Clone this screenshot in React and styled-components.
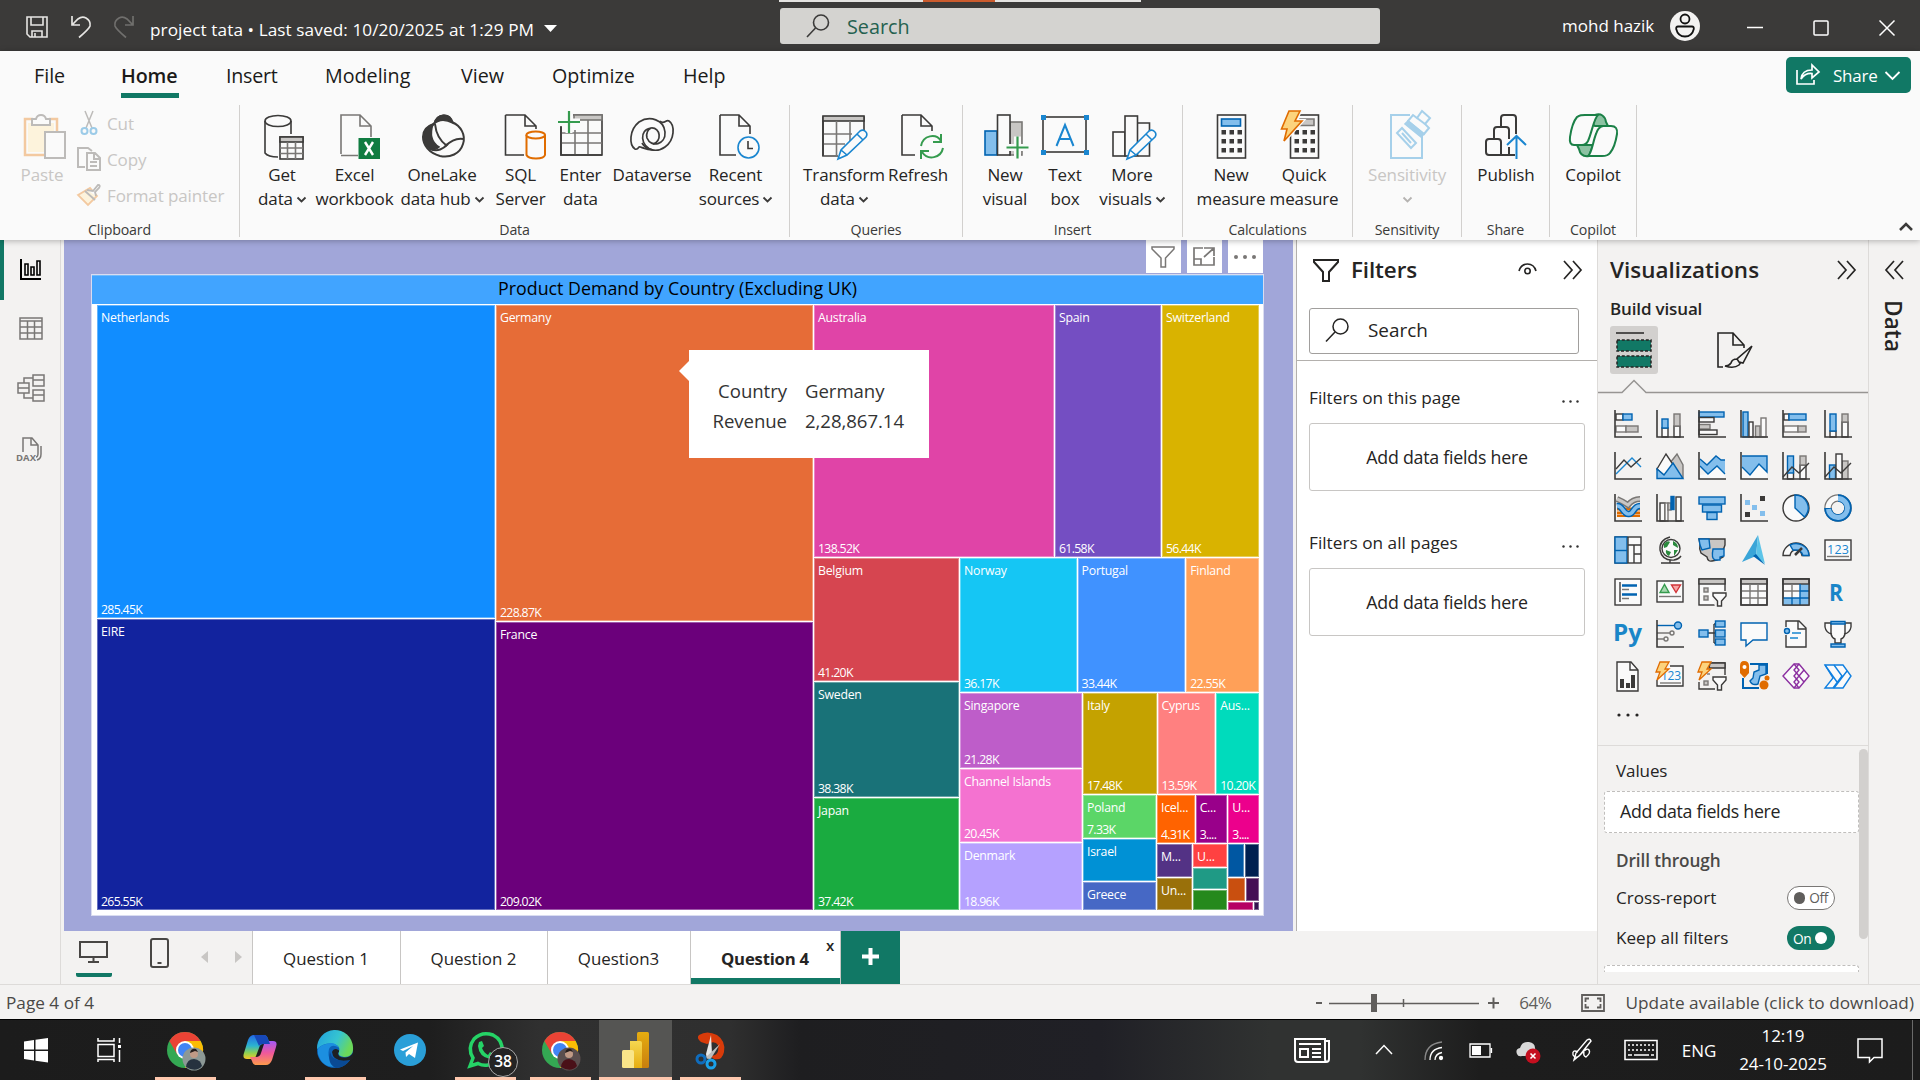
import React from "react";
import styled, { createGlobalStyle, css } from "styled-components";

const K = "#3b3a39", B = "#0063b1", BF = "#83beec", G = "#797775", GF = "#c8c6c4", W = "#fafafa";
const GREEN = "#117865";

const Global = createGlobalStyle`
  *{box-sizing:border-box}
  html,body{margin:0;padding:0;overflow:hidden}
  body{font-family:"Open Sans","Noto Sans",sans-serif;font-size:17px;color:#252423;white-space:nowrap}
  svg{display:block;flex:none;overflow:visible}
`;
const Screen = styled.div`width:1920px;height:1080px;display:flex;flex-direction:column;background:#f3f2f1;overflow:hidden;`;
const Txt = styled.span`
  font-size:${p => p.$s || 17}px;letter-spacing:${p => p.$ls || 0}px;font-weight:${p => p.$b || 400};
  color:${p => p.$c || "inherit"};line-height:${p => p.$lh || 24}px;
`;
const Spacer = styled.div`flex:1;`;
const Gap = styled.div`flex:none;width:${p => p.$w}px;`;

const Svg = ({ w, h, children, s = K, sw = 1.5, f = "none" }) => (
  <svg width={w} height={h} viewBox={`0 0 ${w} ${h}`} fill={f} stroke={s} strokeWidth={sw}>{children}</svg>
);
const R = ({ x, y, w, h, f = W, s = K }) => <rect x={x} y={y} width={w} height={h} fill={f} stroke={s} />;

/* ---------- Title bar ---------- */
const TitleBar = styled.header`height:51px;flex:none;background:${K};color:#fff;display:flex;align-items:flex-start;position:relative;`;
const TitleIcons = styled.div`display:flex;gap:23px;padding:16px 0 0 26px;width:150px;`;
const FileName = styled.div`display:flex;align-items:center;gap:10px;padding-top:18px;width:630px;`;
const TitleSearch = styled.div`
  width:600px;height:36px;margin-top:8px;background:#d4d3d0;border-radius:3px;display:flex;align-items:center;
  padding-left:26px;gap:17px;color:#25614f;padding-top:1px;
`;
const TopStrip = styled.div`position:absolute;left:779px;top:0;width:362px;height:2px;background:linear-gradient(90deg,#e4e3e1 144px,#cb5b2d 144px 216px,#e4e3e1 216px);`;
const UserArea = styled.div`flex:1;display:flex;align-items:center;padding-left:182px;height:52px;`;
const WinBtns = styled.div`display:flex;align-items:center;gap:50px;margin-left:47px;padding-top:4px;`;

const Title = () => (
  <TitleBar>
    <TopStrip />
    <TitleIcons>
      <Svg w={22} h={22} s="#e6e5e3" sw={1.6}><path d="M1 1H21V21H4L1 18ZM5 1V9H17V1M6 21V15H16V21M9 21V17" /></Svg>
      <Svg w={20} h={22} s="#e6e5e3" sw={1.7}><path d="M1 0V9H9M1 9L7 3Q11 0 15 2Q20 5 19 10Q18 13 8 21.500" /></Svg>
      <Svg w={20} h={22} s="#706f6d" sw={1.7}><path d="M19 0V9H11M19 9L13 3Q9 0 5 2Q0 5 1 10Q2 13 12 21.500" /></Svg>
    </TitleIcons>
    <FileName>
      <Txt $s={17.2} $ls={0.08}>project tata • Last saved: 10/20/2025 at 1:29 PM</Txt>
      <svg width="13" height="11"><path d="M0 0H13L6.500 7Z" fill="#fff" /></svg>
    </FileName>
    <TitleSearch>
      <Svg w={24} h={26} s="#3b3a39" sw={1.6}><circle cx="15" cy="8.500" r="7.500" /><path d="M9.500 14L1 23" /></Svg>
      <Txt $s={19.8}>Search</Txt>
    </TitleSearch>
    <UserArea>
      <Txt $s={17} $ls={0}>mohd hazik</Txt>
      <Gap $w={16} />
      <svg width="30" height="30"><circle cx="15" cy="15" r="15" fill="#f3f2f1" /><g fill="none" stroke="#111" strokeWidth="1.800"><circle cx="15" cy="8" r="4.500" /><path d="M8 15.500H22Q24 15.500 23.800 18Q22 25.500 15 25.500Q8 25.500 6.200 18Q6 15.500 8 15.500Z" /></g></svg>
      <WinBtns>
        <Svg w={16} h={16} s="#fff"><path d="M0 7.500H16" /></Svg>
        <Svg w={16} h={16} s="#fff"><rect x="1" y="1" width="14" height="14" rx="1" /></Svg>
        <Svg w={16} h={16} s="#fff"><path d="M0.500 0.500L15.500 15.500M15.500 0.500L0.500 15.500" /></Svg>
      </WinBtns>
    </UserArea>
  </TitleBar>
);

/* ---------- Ribbon ---------- */
const Ribbon = styled.section`height:189px;flex:none;background:#fafafa;display:flex;flex-direction:column;position:relative;z-index:2;box-shadow:0 1px 6px rgba(0,0,0,.28);`;
const MenuRow = styled.nav`height:54px;display:flex;padding-left:34px;`;
const MenuTab = styled.div`
  width:${p => p.$w}px;margin-right:${p => p.$g}px;height:47px;flex:none;padding-top:12px;white-space:nowrap;
  font-size:19.7px;line-height:26px;letter-spacing:${p => p.$ls || 0}px;color:#1b1a19;
  ${p => p.$on && css`font-weight:600;border-bottom:5px solid ${GREEN};`}
`;
const ShareBtn = styled.button`
  margin:6px 9px 0 auto;width:125px;height:36px;border:0;border-radius:5px;background:${GREEN};color:#fff;
  display:flex;align-items:center;padding:0 0 0 10px;font:17px "Open Sans",sans-serif;letter-spacing:-.2px;
`;
const Groups = styled.div`display:flex;height:132px;`;
const Group = styled.div`
  width:${p => p.$w}px;border-right:1px solid #d2d0ce;display:flex;flex-direction:column;justify-content:space-between;
`;
const GroupBody = styled.div`display:flex;padding:5px 0 0 ${p => p.$p}px;`;
const GroupLabel = styled.div`text-align:center;font-size:14.200px;line-height:20px;letter-spacing:-.15px;color:${K};margin-bottom:-3px;`;
const BigBtn = styled.div`
  width:${p => p.$w}px;flex:none;display:flex;flex-direction:column;align-items:center;
  color:${p => p.$off ? "#c8c6c4" : "#252423"};
  & > svg{margin-bottom:1px;}
`;
const BtnLine = styled.div`font-size:17px;line-height:24px;height:24px;letter-spacing:-.12px;display:flex;align-items:center;gap:4px;& > svg{margin-top:2px;}`;
const ClipList = styled.div`display:flex;flex-direction:column;padding-left:8px;`;
const ClipRow = styled.div`height:36px;display:flex;align-items:center;gap:6px;color:#c8c6c4;font-size:17px;letter-spacing:-.1px;margin-top:${p => p.$t || 0}px;`;
const Caret = ({ c = K }) => <Svg w={9} h={6} s={c} sw={1.8}><path d="M0.500 0.500L4.500 4.500L8.500 0.500" /></Svg>;

const Plus = ({ x, y, r = 12 }) => <g><path d={`M${x - r} ${y}H${x + r}M${x} ${y - r}V${y + r}`} stroke="#fafafa" strokeWidth="7" /><path d={`M${x - r} ${y}H${x + r}M${x} ${y - r}V${y + r}`} stroke="#359b4e" strokeWidth="2.200" /></g>;
const Pencil = () => <path d="M23 49L26 40L45 21Q48 19 50.500 21.500Q53 24 51 27L32 45ZM26 40L32 45M42 24L48 30" fill="#fafafa" stroke="#1a86d0" />;
const Calc = ({ x }) => (
  <g><rect x={x} y="5" width="28" height="43" fill="#fafafa" stroke={K} />
    {[0, 1, 2].map(r => [0, 1, 2].map(c => <rect key={r + "" + c} x={x + 4 + c * 8} y={20 + r * 9} width="4.500" height="4.500" fill={K} stroke="none" />))}</g>
);

const big = {
  get: <><path d="M9 11V43Q12 47 22 47M35 11V24" /><ellipse cx="22" cy="11" rx="13" ry="5.500" /><rect x="24" y="27" width="23" height="22" fill="#fafafa" /><rect x="24" y="27" width="23" height="5" fill={GF} /><path d="M24 38H47M24 43.500H47M31.500 32V49M39.500 32V49" stroke={G} /></>,
  excel: <><path d="M12 44V5H31L42 16V27M31 5V16H42M12 45.500H29" stroke={G} /><rect x="29.500" y="28" width="21.500" height="21" fill="#107c41" stroke="none" /><path d="M36 32L44 45M44 32L36 45" stroke="#fff" strokeWidth="2.400" /></>,
  lake: <g transform="translate(1 0)"><path d="M17 14C21 3 32 3 35 12C44 16 49 25 46 34C43 44 33 48 23 46C12 43 6 35 6 27C6 20 10 16 17 14Z" strokeWidth="2" /><path d="M17 14C20 3 33 2 36 13C28 9 21 10 17 14Z" fill={K} /><path d="M16 14C4 19 4 33 13 39C16 40 20 39 22 37C14 32 13 23 16 14Z" fill={K} /><path d="M18 14C19 24 23 31 30 36M28 36C33 32 38 28 46 29" strokeWidth="2" /><path d="M13 39C21 42 26 39 31 34" strokeWidth="2" /></g>,
  sql: <><path d="M10.500 5H30L41 16V19M30 5V16H41M10.500 5V45H29" /><path d="M31.500 25V45Q33 48.500 41 48.500Q49 48.500 50 45V25" stroke="#e06c00" fill="#fafafa" strokeWidth="2" /><ellipse cx="40.700" cy="25" rx="9.300" ry="3.500" stroke="#e06c00" fill="#fafafa" strokeWidth="2" /></>,
  enter: <><path d="M6 16V45H47V5H18" /><rect x="19" y="5" width="28" height="5" fill={GF} stroke={G} /><path d="M6 23H47M6 33H47M20 20V45M33 10V45" stroke={G} /><Plus x={14} y={12} r={11} /><path d="M6 17V45H47" /></>,
  verse: <><g strokeWidth="1.700"><path d="M9 39C3 35 3 20 13 12C24 5 38 10 39 22C40 35 25 38 21 28C20 23 21 20 25 18C13 19 14 37 27 40C19 40 14 36 13 37Q11 40 9 39Z" /><path d="M43 11C49 15 49 30 39 37C31 43 20 40 16 33M43 11C40 9 38 15 34 11M25 18C35 17 36 32 27 34" /></g></>,
  recent: <g transform="translate(2 0)"><path d="M8 5H27L38 16V24M27 5V16H38M8 5V45H24" /><circle cx="36.500" cy="37.500" r="10.500" fill="#fafafa" stroke="#1a86d0" /><path d="M36 31V38.500H41" /></g>,
  transform: <><path d="M46 22V7H5V46H20" /><rect x="5" y="6" width="41" height="5" fill={GF} /><path d="M5 24H34M5 34H27M18.500 11V46M32 11V32M5 46H20" stroke={G} /><path d="M5 11V46" /><g transform="translate(-3 0)"><Pencil /></g></>,
  refresh: <g transform="translate(2 0)"><path d="M8 5H27L38 16V21M27 5V16H38M8 5V45H21" /><g stroke="#359b4e" strokeWidth="2"><path d="M27 36C29 25 42 23 47 31M47 24V32H39M49 38C47 48 34 51 28 42M27 49V41H35" /></g></g>,
  newVisual: <><R x={6} y={21} w={12} h={24} f={BF} s={B} /><rect x="31" y="12" width="12" height="33" fill={GF} stroke={G} /><R x={18.5} y={5} w={12.500} h={40} /><Plus x={38.500} y={37.500} r={11} /></>,
  text: <><rect x="4" y="7" width="43" height="35" /><g fill="#1a86d0" stroke="none"><rect x="2" y="5" width="5" height="5" /><rect x="45" y="5" width="5" height="5" /><rect x="2" y="40" width="5" height="5" /><rect x="45" y="40" width="5" height="5" /></g><path d="M17.500 36L26 15L34.500 36M20.500 29H31.500" stroke="#1a86d0" strokeWidth="2" /></>,
  more: <><R x={7} y={22} w={12} h={24} /><path d="M32 13H43.500V46H32" /><R x={19} y={6} w={12.500} h={40} /><g transform="translate(-2 0)"><Pencil /></g></>,
  calc: <><Calc x={12.500} /><rect x="16.500" y="9" width="19" height="7" fill={BF} stroke={B} /></>,
  quick: <><Calc x={12.500} /><path d="M22 9H36V15.500H19Z" fill={GF} stroke={G} /><path d="M11 1H22L17 11H24L6 31L9 19H3.500Z" fill="#fcd37d" stroke="#fafafa" strokeWidth="4" /><path d="M11 1H22L17 11H24L6 31L9 19H3.500Z" fill="#fcd37d" stroke="#e06c00" /></>,
  sens: <g stroke="#a6d0ea" transform="translate(-1 0)"><path d="M30 5H11V48H42V26" strokeWidth="2" /><path d="M17 23L22 18L36 33L31 38ZM22 23L31 33" strokeWidth="2" /><path d="M28 11L33 5L37 8L42 1L50 8L45 14L49 18L44 24L28 11Z" fill="#fafafa" strokeWidth="2" /><path d="M37 8L45 14" strokeWidth="2" /><path d="M28 11L44 24L41 27L25 14Z" fill="#a6d0ea" /></g>,
  publish: <g strokeWidth="2"><path d="M18 45V44M9 29H18Q21 29 21 32V45H9Q6 45 6 42V32Q6 29 9 29ZM14 28V20Q14 17 17 17H26Q29 17 29 20V29M21 16V8Q21 5 24 5H33Q36 5 36 8V24M21 45H35M29 37V45" /><path d="M36.500 49V26M27 35L36.500 26L46 35" stroke="#1a86d0" /></g>,
  copilot: <g stroke="#1b8047" strokeWidth="2"><path d="M28 5C34 3 38 6 39 12L41 16H28L24 13Z" fill="#8cc2a2" /><path d="M10 35H26L22 46C16 47 13 44 12 39Z" fill="#8cc2a2" /><path d="M12 6Q13 5 18 5H31C27 8 25 22 21 31Q19 35 15 35H7Q2 35 3 27Q5 13 10 7Z" fill="#fafafa" /><path d="M29 16H44Q51 16 50 24Q48 37 43 43Q41 46 35 46H21C25 43 26 31 29 24Q31 17 36 16" fill="#fafafa" /></g>,
};
const Big = ({ w, icon, l1, l2, caret, off }) => (
  <BigBtn $w={w} $off={off}>
    <Svg w={52} h={52} sw={1.600}>{big[icon]}</Svg>
    <BtnLine>{l1}</BtnLine>
    {(l2 || caret) && <BtnLine>{l2}{caret && <Caret c={off ? "#b5b3b1" : K} />}</BtnLine>}
  </BigBtn>
);

const groups = [
  { n: "Data", w: 550, p: 12, b: [[60, "get", "Get", "data", 1], [85, "excel", "Excel", "workbook"], [90, "lake", "OneLake", "data hub", 1], [67, "sql", "SQL", "Server"], [53, "enter", "Enter", "data"], [90, "verse", "Dataverse"], [77, "recent", "Recent", "sources", 1]] },
  { n: "Queries", w: 173, p: 10, b: [[88, "transform", "Transform", "data", 1], [60, "refresh", "Refresh"]] },
  { n: "Insert", w: 220, p: 12, b: [[60, "newVisual", "New", "visual"], [60, "text", "Text", "box"], [74, "more", "More", "visuals", 1]] },
  { n: "Calculations", w: 170, p: 12, b: [[72, "calc", "New", "measure"], [74, "quick", "Quick", "measure"]] },
  { n: "Sensitivity", w: 109, p: 14, b: [[80, "sens", "Sensitivity", "", 1, 1]] },
  { n: "Share", w: 88, p: 4, b: [[80, "publish", "Publish"]] },
  { n: "Copilot", w: 87, p: 4, b: [[78, "copilot", "Copilot"]] },
];
const CollapseBtn = styled.div`flex:1;display:flex;align-items:flex-end;justify-content:flex-end;padding:0 7px 6px 0;`;

const RibbonBar = () => (
  <Ribbon>
    <MenuRow>
      <MenuTab $w={31} $g={56}>File</MenuTab>
      <MenuTab $w={58} $g={47} $on $ls={-0.15}>Home</MenuTab>
      <MenuTab $w={52} $g={47} $ls={-0.25}>Insert</MenuTab>
      <MenuTab $w={88} $g={48}>Modeling</MenuTab>
      <MenuTab $w={44} $g={47}>View</MenuTab>
      <MenuTab $w={84} $g={47}>Optimize</MenuTab>
      <MenuTab $w={44} $g={0}>Help</MenuTab>
      <ShareBtn>
        <Svg w={24} h={22} s="#fff" sw={1.700}><path d="M1 6V20H18V16M5 15Q6 6 16 6V1L23 8L16 14V9.500Q9 9 5 15Z" /></Svg>
        <Gap $w={13} />Share<Gap $w={7} />
        <Svg w={15} h={9} s="#fff" sw={1.800}><path d="M0.500 1L7.500 8L14.500 1" /></Svg>
      </ShareBtn>
    </MenuRow>
    <Groups>
      <Group $w={240}>
        <GroupBody $p={15}>
          <BigBtn $w={54} $off>
            <Svg w={52} h={52} sw={2}>
              <path d="M17 9H9V45H31M33 9H41V22" stroke="#f3c9a0" strokeWidth="2.500" /><path d="M12 13H38V42H12Z" fill="#fdf3dc" stroke="none" />
              <path d="M16 15V9H20Q21 5 25 5Q29 5 30 9H34V15Z" stroke="#bdbbb9" fill="#fafafa" /><rect x="29" y="22" width="20" height="26" stroke="#bdbbb9" fill="#fafafa" />
            </Svg>
            <BtnLine>Paste</BtnLine>
          </BigBtn>
          <ClipList>
            <ClipRow $t={-5}><Svg w={24} h={24} s="#bdbbb9"><path d="M8 0L15 17M16 0L9 17" /><circle cx="7.500" cy="20" r="3" stroke="#9ccbe8" strokeWidth="2" /><circle cx="16.500" cy="20" r="3" stroke="#9ccbe8" strokeWidth="2" /></Svg>Cut</ClipRow>
            <ClipRow><Svg w={24} h={24} s="#bdbbb9" sw={2}><path d="M8 20H1V1H11L15 4" /><path d="M10 6H18L23 11V23H10ZM17 6V12H23M13 15H20M13 19H20" fill="#fafafa" /></Svg>Copy</ClipRow>
            <ClipRow><Svg w={24} h={24} s="#bdbbb9" sw={1.800}><path d="M1 12L13 5L20 13L11 22Z" stroke="#f3c9a0" fill="#fdf3dc" /><path d="M8 8L18 17M10 7L16 8L21 2Q24 2 22 5L18 9L19 13" fill="#fafafa" /></Svg>Format painter</ClipRow>
          </ClipList>
        </GroupBody>
        <GroupLabel>Clipboard</GroupLabel>
      </Group>
      {groups.map(g => (
        <Group key={g.n} $w={g.w}>
          <GroupBody $p={g.p}>{g.b.map((b, i) => <Big key={i} w={b[0]} icon={b[1]} l1={b[2]} l2={b[3]} caret={b[4]} off={b[5]} />)}</GroupBody>
          <GroupLabel>{g.n}</GroupLabel>
        </Group>
      ))}
      <CollapseBtn><Svg w={14} h={9} sw={2.500}><path d="M1 8L7 2L13 8" /></Svg></CollapseBtn>
    </Groups>
  </Ribbon>
);

/* ---------- Left rail ---------- */
const Main = styled.div`height:744px;flex:none;display:flex;`;
const Rail = styled.nav`width:61px;border-right:1px solid #dddbd9;display:flex;flex-direction:column;`;
const RailItem = styled.div`
  height:${p => p.$h || 60}px;display:flex;align-items:center;justify-content:center;
  border-left:4px solid ${p => p.$on ? GREEN : "transparent"};padding:0 3px 2px 0;
`;
const SideRail = () => (
  <Rail>
    <RailItem $on><Svg w={21} h={21} s="#000" sw={2}><path d="M1 0V20H21" /><path d="M5 5H8V16H5ZM11 8H14V16H11ZM17 2H20V16H17Z" strokeWidth="1.600" /></Svg></RailItem>
    <RailItem $h={58}><Svg w={24} h={23} s={G}><path d="M1 1H23V22H1ZM1 4H23M1 10H23M1 16H23M8.500 4V22M15.500 4V22" /></Svg></RailItem>
    <RailItem $h={62}><Svg w={28} h={28} s={G}><path d="M16 1H27V12H16ZM16 6H27M1 9H12V19H1ZM1 14H12M16 16H27V27H16ZM16 21H27M7 9V4H16M7 19V24H16" /></Svg></RailItem>
    <RailItem $h={60}><Svg w={30} h={24} s={G}><path d="M7 15V1H16L22 8V16Q22 20 20 20M15 1V8H22M25 9V17Q25 22 21 23" /><text x="0" y="23.500" fontSize="9.500" fontWeight="700" fill={G} stroke="none" textLength="20">DAX</text></Svg></RailItem>
  </Rail>
);

/* ---------- Canvas and treemap ---------- */
const Work = styled.div`width:1235px;display:flex;flex-direction:column;`;
const Canvas = styled.div`height:691px;flex:none;margin:0 3px 0 3px;background:#a1a6d9;padding-left:27px;display:flex;flex-direction:column;`;
const HeaderIcons = styled.div`height:34px;width:1172px;display:flex;justify-content:flex-end;gap:6px;`;
const HeaderBtn = styled.div`width:35px;height:33px;background:#fff;display:flex;align-items:center;justify-content:center;padding-right:1px;`;
const Visual = styled.div`width:1173px;height:642px;background:#fff;border:1px solid #d9dcf0;position:relative;`;
const VisualTitle = styled.div`height:29px;background:#41a4ff;text-align:center;font-size:17.800px;line-height:24px;color:#000;border-top:1px solid #72bbfb;`;
const TreeMap = styled.div`margin:1px 0 0 5px;width:1162px;height:605px;display:flex;gap:1px;`;
const Split = styled.div`display:flex;flex-direction:${p => p.$d};gap:1px;flex:${p => p.$n} 1 0;min-width:0;min-height:0;`;
const Tile = styled.div`
  flex:${p => p.$n} 1 0;min-width:0;min-height:0;background:${p => p.$c};color:#fff;box-shadow:inset 0 0 0 1px rgba(255,255,255,.35);
  display:flex;flex-direction:column;justify-content:space-between;overflow:hidden;
  font-size:12.300px;line-height:20px;letter-spacing:-.25px;
`;
const Name = styled.span`margin:3px 0 0 4px;`;
const Val = styled.span`line-height:14px;letter-spacing:-.68px;margin:0 0 1px 4px;`;
const t = (n, c, name, v) => ({ n, c, name, v });
const sp = (n, d, k) => ({ n, d, k });
const tree = [
  sp(398, "column", [t(313, "#118dff", "Netherlands", "285.45K"), t(291, "#12239e", "EIRE", "265.55K")]),
  sp(317, "column", [t(316, "#e66c37", "Germany", "228.87K"), t(288, "#6b007b", "France", "209.02K")]),
  sp(445, "column", [
    sp(252, "row", [t(240, "#e044a7", "Australia", "138.52K"), t(106, "#744ec2", "Spain", "61.58K"), t(97, "#d9b300", "Switzerland", "56.44K")]),
    sp(352, "row", [
      sp(145, "column", [t(123, "#d64550", "Belgium", "41.20K"), t(115, "#197278", "Sweden", "38.38K"), t(112, "#1aab40", "Japan", "37.42K")]),
      sp(299, "column", [
        sp(134, "row", [t(117, "#15c6f4", "Norway", "36.17K"), t(108, "#4092ff", "Portugal", "33.44K"), t(73, "#ffa058", "Finland", "22.55K")]),
        sp(217, "row", [
          sp(122, "column", [t(75, "#be5dc9", "Singapore", "21.28K"), t(73, "#f472d0", "Channel Islands", "20.45K"), t(67, "#b5a1ff", "Denmark", "18.96K")]),
          sp(176, "column", [
            sp(101, "row", [t(74, "#c4a200", "Italy", "17.48K"), t(58, "#ff8080", "Cyprus", "13.59K"), t(43, "#00dbbc", "Aus...", "10.20K")]),
            sp(115, "row", [
              sp(73, "column", [t(43, "#5bd667", "Poland", "7.33K"), t(42, "#0091d5", "Israel"), t(28, "#4668c5", "Greece")]),
              sp(102, "column", [
                sp(48, "row", [t(38, "#ff6300", "Icel...", "4.31K"), t(32, "#99008a", "C...", "3...."), t(31, "#ec008c", "U...", "3....")]),
                sp(66, "row", [
                  sp(35, "column", [t(33, "#533285", "M..."), t(32, "#99700a", "Un...")]),
                  sp(34, "column", [t(23, "#ff4141", "U..."), t(21, "#1f9a85"), t(20, "#25891c")]),
                  sp(31, "column", [
                    sp(32, "row", [t(16, "#0057a2"), t(14, "#002050")]),
                    sp(23, "row", [t(17, "#c94f0f"), t(13, "#450f54")]),
                    sp(8, "row", [t(25, "#b60064"), t(5, "#34124f")]),
                  ]),
                ]),
              ]),
            ]),
          ]),
        ]),
      ]),
    ]),
  ]),
];
const Node = ({ x }) => x.k
  ? <Split $d={x.d} $n={x.n}>{x.k.map((c, i) => <Node key={i} x={c} />)}</Split>
  : <Tile $n={x.n} $c={x.c}>{x.name && <Name>{x.name}</Name>}{x.v && <Val>{x.v}</Val>}</Tile>;

const Tooltip = styled.div`
  position:absolute;left:597px;top:75px;width:240px;height:108px;background:#fff;padding:26px 23px;
  display:grid;grid-template-columns:75px auto;column-gap:18px;grid-auto-rows:30px;font-size:18.600px;line-height:30px;color:#333;letter-spacing:-.05px;
  &::before{content:"";position:absolute;left:-10px;top:11px;border:10px solid transparent;border-left:0;border-right-color:#fff;}
`;
const TipLabel = styled.div`text-align:right;`;

/* ---------- Page tabs ---------- */
const Pages = styled.div`height:53px;flex:none;display:flex;`;
const ViewBtns = styled.div`width:192px;display:flex;border-right:1px solid #c8c6c4;`;
const DeskBtn = styled.div`width:36px;height:46px;margin-left:15px;border-bottom:4px solid ${GREEN};border-radius:0 0 2px 2px;display:flex;justify-content:center;padding:10px 2px 0 0;`;
const PhoneBtn = styled.div`margin:7px 32px 0 38px;`;
const Arrows = styled.div`display:flex;gap:27px;padding-top:20px;`;
const Page = styled.div`
  width:${p => p.$w}px;background:#fff;border-right:1px solid #c8c6c4;display:flex;align-items:center;justify-content:center;
  font-size:${p => p.$on ? 16.7 : 16.9}px;letter-spacing:${p => p.$on ? -.2 : 0}px;padding:1px 1px 0 0;position:relative;
  ${p => p.$on && css`font-weight:700;box-shadow:inset 0 -6px ${GREEN};`}
`;
const CloseX = styled.span`position:absolute;right:6px;top:4px;font-size:15px;line-height:20px;font-weight:600;`;
const AddPage = styled.div`width:59px;background:${GREEN};display:flex;align-items:center;justify-content:center;padding-bottom:2px;`;

const WorkArea = () => (
  <Work>
    <Canvas>
      <HeaderIcons>
        <HeaderBtn><Svg w={24} h={22} s={G}><path d="M1 1H23V3L14.500 12V21H10V12L1 3Z" /></Svg></HeaderBtn>
        <HeaderBtn><Svg w={22} h={19} s={G} sw={1.700}><path d="M10 1H1V18H21V10M1 12H8V18M11 1H21V9M21 1L11 10" /></Svg></HeaderBtn>
        <HeaderBtn><Svg w={22} h={4} s="none" f={G}><circle cx="2" cy="2" r="2" /><circle cx="11" cy="2" r="2" /><circle cx="20" cy="2" r="2" /></Svg></HeaderBtn>
      </HeaderIcons>
      <Visual>
        <VisualTitle>Product Demand by Country (Excluding UK)</VisualTitle>
        <TreeMap>{tree.map((x, i) => <Node key={i} x={x} />)}</TreeMap>
        <Tooltip><TipLabel>Country</TipLabel><div>Germany</div><TipLabel>Revenue</TipLabel><div>2,28,867.14</div></Tooltip>
      </Visual>
    </Canvas>
    <Pages>
      <ViewBtns>
        <DeskBtn><Svg w={29} h={22} s="#484644" sw={2}><path d="M1 1H28V16H1ZM14.500 16V21M9 21H20" /></Svg></DeskBtn>
        <PhoneBtn><Svg w={19} h={30} s="#484644" sw={2}><rect x="1" y="1" width="17" height="28" rx="2" /><path d="M7.500 25H11.500" /></Svg></PhoneBtn>
        <Arrows><svg width="7" height="12"><path d="M7 0V12L0 6Z" fill="#c8c6c4" /></svg><svg width="7" height="12"><path d="M0 0V12L7 6Z" fill="#c8c6c4" /></svg></Arrows>
      </ViewBtns>
      <Page $w={148}>Question 1</Page>
      <Page $w={147}>Question 2</Page>
      <Page $w={143}>Question3</Page>
      <Page $w={150} $on>Question 4<CloseX>x</CloseX></Page>
      <AddPage><Svg w={17} h={17} s="#fff" sw={4}><path d="M0 8.500H17M8.500 0V17" /></Svg></AddPage>
    </Pages>
  </Work>
);

/* ---------- Filters ---------- */
const FilterCol = styled.aside`width:301px;height:691px;background:#fff;border-left:1px solid #b3b0ad;`;
const PaneHead = styled.div`display:flex;align-items:center;height:60px;padding:0 ${p => p.$r || 15}px 0 ${p => p.$p}px;color:#252423;`;
const FilterTop = styled.div`height:121px;border-bottom:1px solid #b3b0ad;`;
const SearchBox = styled.div`margin:8px 0 0 12px;width:270px;height:46px;border:1px solid #a19f9d;border-radius:3px;display:flex;align-items:center;gap:19px;padding:0 0 2px 15px;font-size:18.900px;`;
const FSection = styled.div`height:145px;padding:25px 12px 0 12px;`;
const FHead = styled.div`display:flex;justify-content:space-between;height:24px;line-height:24px;font-size:17.200px;letter-spacing:.02px;padding-right:6px;margin-bottom:13px;`;
const DropBox = styled.div`height:68px;border:1px solid #c8c6c4;border-radius:3px;display:flex;align-items:center;justify-content:center;font-size:17.800px;letter-spacing:-.25px;`;
const Chev = ({ flip }) => <Svg w={19} h={20} s="#252423" sw={1.700}><path d={flip ? "M9 1L1 10L9 19M18 1L10 10L18 19" : "M1 1L9 10L1 19M10 1L18 10L10 19"} /></Svg>;
const Dots = () => <Svg w={17} h={22} s="none" f="#333"><circle cx="1.500" cy="15.500" r="1.200" /><circle cx="8.500" cy="15.500" r="1.200" /><circle cx="15.500" cy="15.500" r="1.200" /></Svg>;

const Filters = () => (
  <FilterCol>
    <FilterTop>
      <PaneHead $p={16}>
        <Svg w={26} h={23} s="#252423" sw={2}><path d="M1 1H25V3L16 13V22H10V13L1 3Z" /></Svg>
        <Gap $w={12} /><Txt $s={22.4} $b={600} $ls={-0.1} $lh={30}>Filters</Txt><Spacer />
        <Svg w={19} h={14} s="#252423" sw={1.600}><path d="M1 8Q3 1 9.500 1Q16 1 18 8" /><circle cx="9.500" cy="8" r="2.700" /></Svg>
        <Gap $w={26} /><Chev />
      </PaneHead>
      <SearchBox><Svg w={24} h={24} s="#252423"><circle cx="15.500" cy="8.500" r="7.500" /><path d="M10 14L1 23.500" /></Svg>Search</SearchBox>
    </FilterTop>
    <FSection><FHead>Filters on this page<Dots /></FHead><DropBox>Add data fields here</DropBox></FSection>
    <FSection><FHead>Filters on all pages<Dots /></FHead><DropBox>Add data fields here</DropBox></FSection>
  </FilterCol>
);

/* ---------- Visualizations ---------- */
const VizCol = styled.aside`width:272px;border-left:1px solid #dddbd9;border-right:1px solid #dddbd9;display:flex;flex-direction:column;`;
const BuildLabel = styled.div`height:26px;padding:0 0 0 12px;margin-top:-5px;font-weight:600;font-size:17px;line-height:28px;letter-spacing:-.15px;`;
const ModeRow = styled.div`display:flex;padding:5px 0 0 12px;gap:53px;`;
const ModeBtn = styled.div`width:48px;height:48px;border-radius:3px;background:${p => p.$on ? "#d2d0ce" : "none"};display:flex;align-items:center;justify-content:center;`;
const Grid = styled.div`display:grid;grid-template-columns:repeat(6,28px);gap:14px;padding:16px 0 0 16px;`;
const More = styled.div`padding:22px 0 0 19px;height:55px;`;
const Wells = styled.div`height:239px;border-top:1px solid #dddbd9;display:flex;`;
const WellBody = styled.div`width:261px;padding-left:6px;display:flex;flex-direction:column;`;
const WellRow = styled.div`display:flex;align-items:center;flex:none;height:${p => p.$h}px;padding:${p => p.$t || 0}px 24px 0 12px;justify-content:space-between;`;
const Well = styled.div`height:${p => p.$h}px;flex:none;background:#fff;border:1px dashed #c0bebc;border-radius:3px 3px ${p => p.$cut ? "0 0" : "3px 3px"};${p => p.$cut && "border-bottom:0;margin-top:4px;"}padding:0 15px;font-size:17.800px;line-height:38px;letter-spacing:-.3px;`;
const Thumb = styled.div`width:9px;height:190px;border-radius:5px;background:#d2d0ce;margin-top:3px;`;
const Toggle = styled.div`
  width:48px;height:24px;border-radius:12px;display:flex;align-items:center;gap:4px;padding:0 6px;font-size:13.700px;letter-spacing:-.4px;
  ${p => p.$on ? css`background:${GREEN};color:#fff;` : css`background:#fff;border:1px solid #797775;color:#605e5c;`}
  &::${p => p.$on ? "after" : "before"}{content:"";width:12px;height:12px;border-radius:6px;background:${p => p.$on ? "#fff" : "#605e5c"};}
`;
const Ax = () => <path d="M1 0V27H28" strokeWidth="1.600" />;
const ln = "M1 25L10 15L17 21L27 11";
const Bolt = () => <path d="M4 0H13L9 7H13L1 18L4 10H0Z" fill="#fcd37d" stroke="#e06c00" strokeWidth="1.300" />;
const Fun = () => <path d="M15 15H28V18L23.500 23V28H19.500V23L15 18Z" fill={W} />;
const viz = [
  <><R x={2} y={4} w={7} h={6} /><R x={9} y={4} w={9} h={6} f={BF} s={B} /><R x={2} y={16} w={10} h={6} s={G} /><R x={12} y={16} w={12} h={6} f={GF} s={G} /><Ax /></>,
  <><R x={6} y={18} w={6} h={9} /><R x={6} y={9} w={6} h={9} f={BF} s={B} /><R x={18} y={16} w={6} h={11} /><R x={18} y={4} w={6} h={12} f={GF} s={G} /><Ax /></>,
  <><R x={1} y={2} w={25} h={5} f={BF} s={B} /><R x={1} y={7.500} w={15} h={4.500} /><R x={1} y={14.500} w={11} h={4.500} f={GF} s={G} /><R x={1} y={20} w={18} h={4.500} /><Ax /></>,
  <><R x={3} y={2} w={5} h={25} f={BF} s={B} /><R x={9} y={12} w={4} h={15} /><R x={15.500} y={16} w={4.500} h={11} f={GF} s={G} /><R x={21} y={8} w={5} h={19} s={G} /><Ax /></>,
  <><R x={2} y={4} w={5} h={6} /><R x={7} y={4} w={17} h={6} f={BF} s={B} /><R x={2} y={16} w={14} h={6} s={G} /><R x={16} y={16} w={8} h={6} f={GF} s={G} /><Ax /></>,
  <><R x={6} y={21} w={6} h={6} /><R x={6} y={4} w={6} h={17} f={BF} s={B} /><R x={18} y={12} w={6} h={15} /><R x={18} y={4} w={6} h={8} f={GF} s={G} /><Ax /></>,
  <><path d="M2 22L18 6L27 15" stroke="#1a86d0" /><path d="M2 17L10 8L17 15L27 6" /><Ax /></>,
  <><path d="M14 11L21 2L27 13V26" fill={GF} stroke={G} /><path d="M1 17L10 2L18 14L9 24Z" fill={W} /><path d="M1 17L8 23L17 11L27 26.500H1Z" fill={BF} stroke={B} /></>,
  <><path d="M2 23L9 22L18 14L27 22V26H2Z" fill={W} stroke="none" /><path d="M2 7L9 13L18 4L23 8H27V22L19 14L10 22L2 14Z" fill={BF} stroke="none" /><path d="M2 7L9 13L18 4L23 8H27M27 22L19 14L10 22L2 14" stroke={B} /><Ax /></>,
  <><path d="M2 15L10 23L19 12L27 20V26H2Z" fill={W} stroke="none" /><path d="M2 4H27V20L19 12L10 23L2 15Z" fill={BF} stroke="none" /><path d="M2 4H27V20L19 12L10 23L2 15" stroke={B} /><Ax /></>,
  <><R x={5.500} y={20} w={6} h={7} /><R x={5.500} y={4} w={6} h={17} f={BF} s={B} /><R x={18} y={13} w={6} h={14} /><R x={18} y={4} w={6} h={9} f={GF} s={G} /><path d={ln} /><Ax /></>,
  <><R x={5.500} y={13} w={6} h={14} f={BF} s={B} /><R x={18} y={9} w={6} h={18} f={GF} s={G} /><R x={12} y={2} w={6} h={25} /><path d={ln} /><Ax /></>,
  <><path d="M3 19H8M20 19H26M3 15H26" stroke="#e06c00" strokeWidth="3" /><path d="M3 22H26" stroke="#e06c00" strokeWidth="2" /><path d="M3 5Q8 7 14 11Q19 5 26 5" stroke={G} strokeWidth="6" /><path d="M3 5Q8 7 14 11Q19 5 26 5" stroke={GF} strokeWidth="3" /><path d="M3 12C9 11 9 21 15 20C20 20 19 12 26 12" stroke={B} strokeWidth="6.500" /><path d="M3 12C9 11 9 21 15 20C20 20 19 12 26 12" stroke={BF} strokeWidth="3.500" /><Ax /></>,
  <><R x={4} y={9} w={5} h={18} /><R x={9} y={9} w={3} h={18} f={W} s={G} /><R x={12} y={9} w={3} h={7} f={GF} s={G} /><R x={15} y={2.500} w={3} h={13} f={B} s={B} /><R x={20} y={3} w={5} h={24} /><Ax /></>,
  <><R x={1} y={3} w={26} h={7} f={BF} s={B} /><R x={4.500} y={11} w={19} h={7} f={BF} s={B} /><R x={9} y={18.500} w={10} h={7} f={BF} s={B} /></>,
  <><g stroke="none"><rect x="5" y="6" width="5" height="5" fill={BF} /><rect x="20" y="2" width="5" height="5" fill={K} /><rect x="12" y="11" width="5" height="5" fill={BF} /><rect x="5" y="18" width="5" height="5" fill={K} /><rect x="20" y="17" width="5" height="5" fill={BF} /></g><Ax /></>,
  <><circle cx="14" cy="14" r="13" fill={W} /><path d="M13 1A13 13 0 0 1 22.500 23L13 14Z" fill={BF} stroke={B} /></>,
  <><circle cx="14" cy="14" r="10" stroke={G} strokeWidth="7.500" /><circle cx="14" cy="14" r="10" stroke={W} strokeWidth="5" /><path d="M14 4A10 10 0 1 1 4 14" stroke={B} strokeWidth="7.500" /><path d="M14 4.500A9.500 9.500 0 1 1 4.500 15" stroke={BF} strokeWidth="5" /></>,
  <><R x={1} y={1} w={26} h={26} /><R x={1} y={1} w={12} h={26} f={BF} s={B} /><path d="M1 14.500H13" stroke={B} /><path d="M14 9H27M20 9V27M20 18H27M14 1V27" /></>,
  <><circle cx="15" cy="12.500" r="9" fill={W} /><path d="M8 8Q11 4 14 6L11 11L8 12ZM17 5Q22 7 22 12L17 9ZM10 14L15 16L13 20Q9 18 10 14ZM18 14H22L18 20Z" fill="#2b8a3e" stroke="none" /><path d="M14 1Q3 4 4 14Q6 25 18 24Q23 23 25 20M14 24V27M5 27H24" /></>,
  <><path d="M1 3H27V9Q26 12 25 14V21L19 24L14 25Q10 26 9 21L3 17Q1 13 2 8Z" fill={GF} stroke={K} /><path d="M1 3L11 3L12 12L4 14L2 9Z" fill={BF} stroke={B} /><path d="M15 13H26V20L22 21V24H17Q13 23 15 13Z" fill={BF} stroke={B} /></>,
  <g stroke="none"><path d="M18 -1L2 26L16 20Z" fill="#3aa5d8" /><path d="M18 -1L16 20L25 28Z" fill="#5cc4e8" /><path d="M13 20L16 18L25 29Z" fill="#0063b1" /></g>,
  <><path d="M1 19.500A13 12.500 0 0 1 27 19.500H20Q19 14 14 14Q9 14 8 19.500Z" fill={W} /><path d="M8 9A13 12.500 0 0 1 27 19.500H21Q19 14 14 14L11 14Z" fill={BF} stroke={B} /><path d="M13 19L20 12" strokeWidth="2.500" /></>,
  <><R x={1} y={4} w={26} h={20} /><text x="3" y="17.500" fontSize="12.500" textLength="22" fill="#1a86d0" stroke="none">123</text><path d="M3 20.500H25" stroke={G} /></>,
  <><R x={1} y={1} w={26} h={26} /><path d="M6 4V24" /><path d="M8 7.500H23M8 16.500H23" stroke={B} strokeWidth="2.300" /><path d="M8 11.500H15M8 20.500H15" stroke={G} /></>,
  <><R x={1} y={3} w={26} h={21} /><path d="M4 14.500L8.500 6.500L13 14.500Z" stroke="#359b4e" fill="#a7d8b0" /><path d="M15.500 7H24.500L20 14.500Z" stroke="#d13438" fill="#f6a5a5" /><path d="M3 18.500H25" stroke={G} /></>,
  <><R x={1} y={1} w={26} h={26} /><R x={1} y={1} w={26} h={5} f={GF} /><R x={6} y={10} w={4} h={4} f={GF} s={G} /><R x={6} y={18} w={4} h={4} f={GF} s={G} /><path d="M13 13H29V29H17Z" fill="#f3f2f1" stroke="none" /><Fun /></>,
  <><R x={1} y={1} w={26} h={26} /><R x={1} y={1} w={26} h={5} f={GF} /><path d="M1 13H27M1 20H27M10 6V27M18 6V27" stroke={G} /><rect x="1" y="1" width="26" height="26" /></>,
  <><R x={1} y={1} w={26} h={26} /><rect x="18" y="6" width="9" height="21" fill={BF} stroke="none" /><rect x="1" y="20" width="26" height="7" fill={BF} stroke="none" /><R x={1} y={1} w={26} h={5} f={GF} /><path d="M1 13H18M10 6V20" stroke={G} /><path d="M18 6V27M1 20H27M10 20V27M18 13H27" stroke={B} /><rect x="1" y="1" width="26" height="26" /></>,
  <text x="5" y="22.500" fontSize="24" fontWeight="700" textLength="14" lengthAdjust="spacingAndGlyphs" fill="#1a86c8" stroke="none">R</text>,
  <text x="-1" y="20.500" fontSize="24" fontWeight="700" textLength="29" lengthAdjust="spacingAndGlyphs" fill="#1a86c8" stroke="none">Py</text>,
  <><path d="M1 5.500H19" stroke={B} /><circle cx="22" cy="5.500" r="3.500" fill={BF} stroke={B} /><path d="M1 13H14M1 19H8" stroke={G} /><circle cx="16" cy="13" r="2" stroke={G} /><circle cx="10" cy="19" r="2" stroke={G} /><Ax /></>,
  <><path d="M10 13H16M16 4V23M16 4H18M16 23H18M16 13H18" /><R x={1} y={10} w={9} h={7} f={BF} s={B} /><R x={17.500} y={1} w={9.500} h={6} f={BF} s={B} /><R x={17.500} y={10} w={9.500} h={7} f={BF} s={B} /><R x={17.500} y={19} w={9.500} h={6} f={BF} s={B} /></>,
  <path d="M1 3H27V20H13L6 26V20H1Z" fill={W} stroke={B} />,
  <><path d="M4 7V1H17L24 8V27H4V15" fill={W} /><path d="M16 1V9H24" /><circle cx="5" cy="11" r="2.500" fill={BF} stroke={B} /><path d="M10 13H19M8 18H16" stroke="#1a86d0" /></>,
  <><path d="M7 3H21V14Q20 18 17 19V23H11V19Q8 18 7 14ZM7 3H1V7Q2 13 8 14M21 3H27V7Q26 13 20 14" fill={W} /><path d="M7 1.500H21V4H7ZM7 24H21V27H7Z" fill={BF} stroke={B} /></>,
  <><path d="M3 0H17L24 8V29H3Z" fill={W} /><path d="M16 0V8H24" /><g fill={K} stroke="none"><rect x="6" y="17" width="4" height="9" /><rect x="12" y="21" width="4" height="5" /><rect x="17" y="13" width="4" height="13" /></g></>,
  <><path d="M14 4H27V24H1V18" fill={W} /><text x="5" y="18" fontSize="12" fill="#1a86d0" stroke="none" textLength="20">123</text><path d="M4 21H25" stroke={G} /><Bolt /></>,
  <><path d="M14 1H27V13M1 20V27H17" /><path d="M12 1H27V6H11Z" fill={GF} /><R x={6} y={19} w={4} h={4} f={GF} s={G} /><path d="M9 12H12" stroke={G} /><Bolt /><Fun /></>,
  <><path d="M10 2H27V12M3 16V26H19" stroke={B} strokeWidth="2" /><path d="M19 3V8L14 10L13 16L10 19Q12 24 18 22L20 14L26 12V3Z" fill={BF} stroke={B} /><path d="M4 -1Q9 -1 9 4V11L4.500 16L0 11V4Q0 -1 4 -1Z" fill="#e06c00" stroke="none" /><circle cx="4.500" cy="5" r="2" fill="#fff" stroke="none" /><circle cx="24" cy="23" r="4.500" fill="#e06c00" stroke="none" /><circle cx="27" cy="16" r="2.500" fill="#e06c00" stroke="none" /></>,
  <g stroke="#8b2fa0"><path d="M12 2H17L27 14L17 26H12L1 14Z" fill={W} /><path d="M12 2L17 8L12 14L17 20L12 26M17 2L12 8L22 20M22 8L12 20L17 26" /></g>,
  <g stroke="#0f7fe0"><path d="M1 3H19L27 14L19 26H1L9 16Z" fill={W} /><path d="M10 3L18 14L9 26M1 3L13 20M23 9L10 26" /></g>,
];

const Visualizations = () => (
  <VizCol>
    <PaneHead $p={12} $r={12}><Txt $s={22.4} $b={600} $ls={0.05} $lh={30}>Visualizations</Txt><Spacer /><Chev /></PaneHead>
    <BuildLabel>Build visual</BuildLabel>
    <ModeRow>
      <ModeBtn $on><Svg w={36} h={36} s="#252423" sw={1.500}><path d="M0 1H28" /><rect x="1" y="8" width="34" height="11" fill={GREEN} strokeDasharray="3 1.800" /><rect x="1" y="24" width="34" height="11" fill={GREEN} strokeDasharray="3 1.800" /></Svg></ModeBtn>
      <ModeBtn><Svg w={36} h={36} s="#252423" sw={1.600}><path d="M6 35H1V1H16L27 13V16M16 1V13H27M35 14L20 27L22 30L26 31L35 14M20 27Q15 27 14 31Q12 34 8 34Q17 37 22 33L24 30" /></Svg></ModeBtn>
    </ModeRow>
    <Svg w={270} h={20} s="#979593"><path d="M0 18.500H24L36 6.500L48 18.500H270" /></Svg>
    <Grid>{viz.map((v, i) => <Svg key={i} w={28} h={28} sw={1.400}>{v}</Svg>)}</Grid>
    <More><Svg w={24} h={6} s="none" f="#252423"><circle cx="2" cy="3" r="1.600" /><circle cx="11" cy="3" r="1.600" /><circle cx="20" cy="3" r="1.600" /></Svg></More>
    <Wells>
      <WellBody>
        <WellRow $h={45} $t={4}><Txt $ls={-0.1}>Values</Txt></WellRow>
        <Well $h={42}>Add data fields here</Well>
        <WellRow $h={47} $t={8}><Txt $b={600} $s={17.2} $ls={-0.1} $c="#4a4947">Drill through</Txt></WellRow>
        <WellRow $h={35}><Txt $s={17.1}>Cross-report</Txt><Toggle>Off</Toggle></WellRow>
        <WellRow $h={46}><Txt $s={17.1}>Keep all filters</Txt><Toggle $on>On</Toggle></WellRow>
        <Well $h={7} $cut />
      </WellBody>
      <Thumb />
    </Wells>
  </VizCol>
);

const DataCol = styled.aside`flex:1;display:flex;flex-direction:column;align-items:center;padding:20px 0 0 0;gap:19px;`;
const Vert = styled.div`writing-mode:vertical-rl;font-size:22.600px;font-weight:600;line-height:30px;letter-spacing:.1px;padding:1px 4px 0 0;`;

/* ---------- Status bar ---------- */
const Status = styled.footer`height:36px;flex:none;border-top:1px solid #dddbd9;display:flex;align-items:center;padding:1px 0 0 6px;color:#4a4947;border-bottom:1px solid #000;`;

/* ---------- Taskbar ---------- */
const Taskbar = styled.div`
  flex:1;display:flex;color:#fff;
  background:linear-gradient(90deg,#1c1c1c 0,#1e1e1e 430px,#303030 540px,#2f2f2f 730px,#1e1e20 800px,#202026 1100px,#303231 1270px,#303231 1360px,#1d1d1d 1480px,#1c1c1c);
`;
const Slot = styled.div`width:${p => p.$w || 75}px;display:flex;justify-content:center;padding-top:12px;flex:none;position:relative;`;
const AppSlot = styled(Slot)`
  ${p => p.$active && css`background:linear-gradient(#555553,#555553) center/73px 100% no-repeat;`}
  &::after{content:"";position:absolute;bottom:0;left:${p => p.$active ? 1 : 7}px;right:${p => p.$active ? 1 : 7}px;height:${p => p.$run ? 3 : 0}px;background:#fec8ae;}
`;
const Badge = styled.div`position:absolute;left:40px;top:27px;width:30px;height:30px;border-radius:15px;border:1px solid #a8a8a8;background:#242424;text-align:center;font-size:15.500px;line-height:27px;font-weight:600;`;
const Clock = styled.div`width:110px;text-align:center;font-size:17px;line-height:28px;letter-spacing:-.1px;padding-top:2px;`;
const Chrome = ({ a, b }) => (
  <svg width="40" height="38" viewBox="-1 0 40 38">
    <circle cx="18" cy="18" r="18" fill="#34a853" /><path d="M18 18L2.400 9A18 18 0 0 1 33.600 9H18Z" fill="#ea4335" /><path d="M18 9H33.600A18 18 0 0 1 18 36L26 22Z" fill="#fbbc04" /><path d="M2.400 9L10 22L18 18L18 9Z" fill="#ea4335" />
    <circle cx="18" cy="18" r="9" fill="#fff" /><circle cx="18" cy="18" r="7" fill="#4285f4" />
    <circle cx="27" cy="27" r="11.500" fill={a} /><circle cx="27" cy="22" r="4" fill="#c09a86" /><path d="M23 21Q24 16 29 17L31 20L28 19Z" fill="#251d1c" /><path d="M19 35Q20 27 27 27Q34 28 35 34Q29 41 19 35Z" fill={b} />
  </svg>
);
const StatusAndTaskbar = () => (
  <>
    <Status>
      <Txt $s={17.2}>Page 4 of 4</Txt><Spacer />
      <Svg w={6} h={14} s="#605e5c" sw={2}><path d="M0 7H6" /></Svg><Gap $w={7} />
      <Svg w={150} h={18} s="#605e5c"><path d="M0 9.500H150M74.500 5V13" /><path d="M45 0V18" strokeWidth="6" /></Svg><Gap $w={9} />
      <Svg w={11} h={12} s="#605e5c" sw={2}><path d="M0 6H11M5.500 0.500V11.500" /></Svg><Gap $w={20} />
      <Txt $s={17} $ls={-0.4} $c="#605e5c">64%</Txt><Gap $w={29} />
      <Svg w={24} h={18} s="#605e5c" sw={1.800}><path d="M1 1H23V17H1ZM4.500 8V4.500H8M16 4.500H19.500V8M4.500 10V13.500H8M16 13.500H19.500V10" /></Svg><Gap $w={21} />
      <Txt $s={17.2} $ls={0.03}>Update available (click to download)</Txt><Gap $w={6} />
    </Status>
    <Taskbar>
      <Slot $w={72}><svg width="24" height="36"><path d="M0 9.500L10 8V17.500H0ZM11.500 7.800L24 6V17.500H11.500ZM0 19H10V28.500L0 27ZM11.500 19H24V30.500L11.500 28.700Z" fill="#fff" /></svg></Slot>
      <Slot $w={73}><Svg w={24} h={36} s="#fff" sw={1.500}><path d="M1 6V9H17V6M1 12.500H17V24.500H1ZM1 30V27.500H17V30M22.500 6V11M22.500 18V30" /><path d="M21 14.500H24" strokeWidth="3" /></Svg></Slot>
      <Gap $w={3} />
      <AppSlot $run><Chrome a="#8c9895" b="#26323f" /></AppSlot>
      <AppSlot>
        <svg width="36" height="36"><defs><linearGradient id="ca" x2="0" y2="1"><stop stopColor="#2469e8" /><stop offset=".45" stopColor="#2bb3d0" /><stop offset=".75" stopColor="#8fd14f" /><stop offset="1" stopColor="#f6c629" /></linearGradient><linearGradient id="cb" x2="0" y2="1"><stop stopColor="#a259f7" /><stop offset=".5" stopColor="#f0589b" /><stop offset="1" stopColor="#fd9a4b" /></linearGradient></defs>
          <g transform="translate(-1 0)"><path d="M12 3H22Q25 3 26 7L28 12H21Q18 12 17 16L14 24Q13 27 9 27H5Q0 27 2 21L6 8Q8 3 12 3Z" fill="url(#ca)" /><path d="M24 33H14Q11 33 10 29L8 25H14Q18 25 19 21L22 12Q23 9 27 9H31Q36 9 34 15L30 28Q28 33 24 33Z" fill="url(#cb)" /><path d="M12 3H22Q25 3 26 7L28 12H21Q18 12 17 14Z" fill="#1748b8" /></g></svg>
      </AppSlot>
      <AppSlot $run>
        <svg width="36" height="36"><defs><linearGradient id="ea" x1="0" x2="1" y2=".4"><stop stopColor="#1f9fe0" /><stop offset=".6" stopColor="#36c5d0" /><stop offset="1" stopColor="#6bd85a" /></linearGradient></defs>
          <g transform="translate(-1 0)"><circle cx="18" cy="18" r="18" fill="#0c62b8" /><path d="M0 17A18 18 0 0 1 36 15Q37 25 27 25Q20 24 22 20Q24 14 17 12Q8 10 0 17Z" fill="url(#ea)" /><path d="M12 17Q9 30 22 34Q6 38 1 22Q-1 14 9 12Q18 9 22 16Q15 11 12 17Z" fill="#1c8fe0" /><path d="M13 20Q15 31 33 28Q27 36 19 36Q10 32 13 20Z" fill="#0a4a94" /><path d="M19 17Q24 18 21 21Q21 26 29 25.500Q33 25 36 21L36 27L33 28Q16 31 15 20Q16 17 19 17Z" fill="#1e2022" /></g></svg>
      </AppSlot>
      <AppSlot><svg width="36" height="36"><circle cx="17" cy="18" r="16" fill="#2a9fd8" /><path d="M7 17.500L25 10.500L22 26L16 22L13 25L12.500 20.500L20 14L10 19Z" fill="#fff" /></svg></AppSlot>
      <AppSlot $run>
        <Svg w={36} h={36} s="#25d366" sw={3.500}><path d="M2 34L5 26Q-1 16 6 7Q14 -1 25 3Q35 8 34 19Q32 31 20 33Q15 34 10 31.500Z" /><path d="M11 10L14 9L16 14L14 16Q16 21 20 23L22 20L27 23Q26 28 22 27Q11 25 10 14Z" fill="#25d366" stroke="none" /></Svg>
        <Badge>38</Badge>
      </AppSlot>
      <AppSlot $run><Chrome a="#5a4e4e" b="#4a1018" /></AppSlot>
      <AppSlot $run $active>
        <svg width="28" height="36"><defs><linearGradient id="pa" y2="1" x2="0"><stop stopColor="#e6ad10" /><stop offset="1" stopColor="#c87e0e" /></linearGradient><linearGradient id="pb" y2="1" x2="0"><stop stopColor="#f6d751" /><stop offset="1" stopColor="#e6ad10" /></linearGradient></defs><rect x="15" width="12" height="36" rx="1.500" fill="url(#pa)" /><path d="M8 9H18Q20 9 20 11V36H8Z" fill="url(#pb)" /><path d="M1.500 18H10Q12 18 12 20V36H1.500Q0 36 0 34.500V19.500Q0 18 1.500 18Z" fill="#f9e589" /></svg>
      </AppSlot>
      <AppSlot $run>
        <svg width="32" height="38"><path d="M4 3Q12 -2 22 3Q31 9 29 20Q27 29 19 27L15 24Q25 24 23 13Q20 8 12 12L6 10Q1 6 4 3Z" fill="#d83b0a" /><path d="M16 3L17 22L12 27L11 22Z" fill="#e8e8e8" /><path d="M25 12L11 25L15 28Z" fill="#bdbdbd" /><g fill="none" strokeWidth="3"><circle cx="6" cy="27" r="4" stroke="#0f6cbd" /><circle cx="16" cy="32" r="4" stroke="#1aa0e8" /></g></svg>
      </AppSlot>
      <Spacer />
      <Slot $w={92}><Svg w={36} h={36} s="#fff" sw={2}><path d="M31 9H35V27Q35 30 32 30H4Q1 30 1 27V7H31V27Q31 30 33 30M5 12H27" /><path d="M6 17H14V25H6ZM18 17H27M18 21H27M18 25H27" /></Svg></Slot>
      <Slot $w={52}><Svg w={18} h={36} s="#fff"><path d="M1 22L9 13.500L17 22" /></Svg></Slot>
      <Slot $w={48}><Svg w={20} h={36} s="#fff" sw={1.300}><path d="M1 28Q1 12 18 10" stroke="#888" /><path d="M6 28Q6 17 18 15.500M11 28Q11 22 18 20.500" /><circle cx="17" cy="26" r="1.500" fill="#fff" /></Svg></Slot>
      <Slot $w={46}><Svg w={24} h={36} s="#fff" sw={1.300}><path d="M1 12H21V25H1ZM22.500 16V21" /><rect x="3" y="14" width="9" height="9" fill="#fff" stroke="none" /></Svg></Slot>
      <Slot $w={48}><svg width="26" height="36"><path d="M2 22Q0 17 5 16Q7 9 14 10Q20 11 20 16L22 24H7Q3 25 2 22Z" fill="#d8d8d8" /><circle cx="18" cy="24" r="7.500" fill="#c50f1f" /><path d="M15.500 21.500L20.500 26.500M20.500 21.500L15.500 26.500" stroke="#fff" strokeWidth="1.600" /></svg></Slot>
      <Slot $w={60}><Svg w={22} h={36} s="#fff" sw={1.400}><path d="M3 28L5 21L16 8Q19 6 20 9L9 23ZM7 20Q1 17 2 23Q5 28 10 22Q16 15 18 18Q20 21 15 25Q12 24 13 20" /></Svg></Slot>
      <Slot $w={58}><Svg w={34} h={36} s="#fff" sw={1.600}><path d="M1 8.500H33V27.500H1Z" /><path d="M4 13H30M4 18H30" strokeDasharray="2 2" /><path d="M4 23H8M10 23H25M27 23H30" /></Svg></Slot>
      <Slot $w={58}><Txt $s={17} $ls={-0.1} $lh={37}>ENG</Txt></Slot>
      <Clock>12:19<br />24-10-2025</Clock>
      <Slot $w={64}><Svg w={26} h={36} s="#fff" sw={1.500}><path d="M1 7H25V25.500H17L12.500 30V25.500H1Z" /></Svg></Slot>
      <Svg w={18} h={60} s="#6a6a6a" sw={1}><path d="M10.500 0V60" /></Svg>
    </Taskbar>
  </>
);

export default function App() {
  return (
    <Screen>
      <Global />
      <Title />
      <RibbonBar />
      <Main>
        <SideRail />
        <WorkArea />
        <Filters />
        <Visualizations />
        <DataCol><Chev flip /><Vert>Data</Vert></DataCol>
      </Main>
      <StatusAndTaskbar />
    </Screen>
  );
}
